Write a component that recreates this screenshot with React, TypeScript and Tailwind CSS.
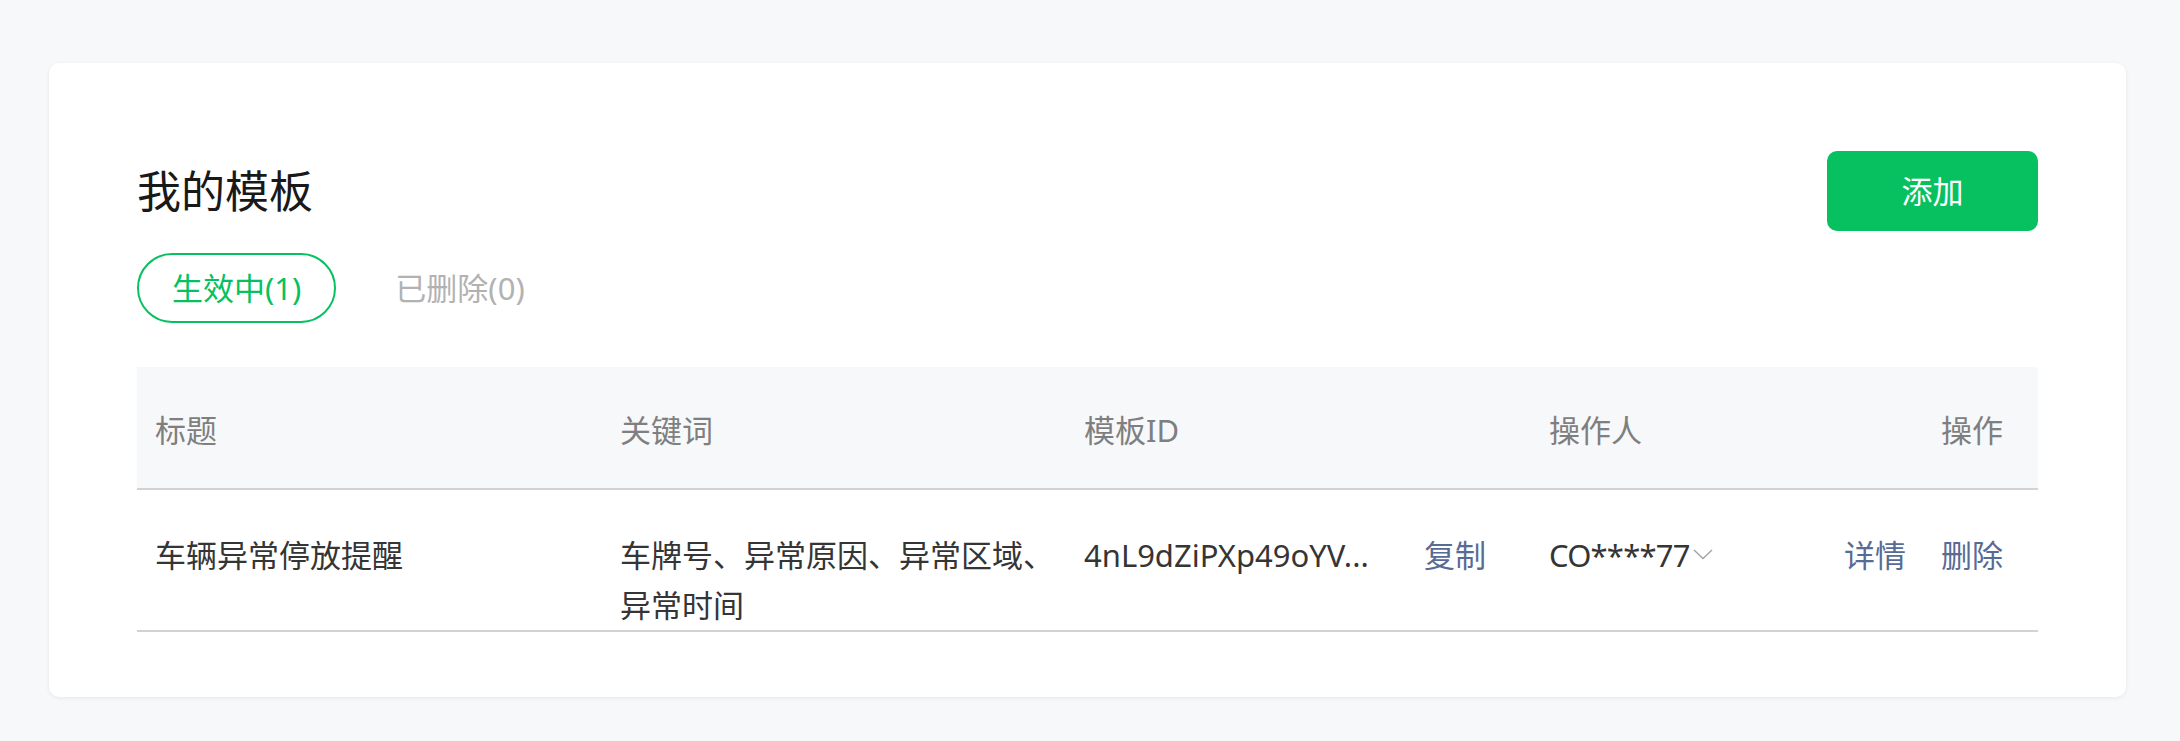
import React from 'react'

function Chevron() {
  return (
    <svg width="20" height="11" viewBox="0 0 20 11" className="ml-[3px] mt-[-2px]" fill="none">
      <path d="M1 1l9 8.5L19 1" stroke="#a3a3a3" strokeWidth="1.4" />
    </svg>
  )
}

export default function App() {
  return (
    <div className="min-h-screen bg-[#f7f8fa] pb-[44px] pl-[49px] pr-[54px] pt-[63px] font-['Noto_Sans','Noto_Sans_CJK_SC',sans-serif]">
      <div className="rounded-[10px] bg-white px-[88px] pb-[65px] pt-[88px] shadow-[0_1px_4px_rgba(0,0,0,0.07)]">
        {/* title + add */}
        <div className="flex h-[80px] items-center justify-between">
          <h1 className="text-[44px] leading-none text-[#191919]">我的模板</h1>
          <button className="flex h-[80px] w-[211px] items-center justify-center rounded-[10px] bg-[#07c160] text-[31px] text-white">
            添加
          </button>
        </div>

        {/* tabs */}
        <div className="mt-[22px] flex items-center gap-[59px]">
          <span className="flex h-[70px] items-center rounded-full border-2 border-[#07c160] px-[33px] text-[31px] text-[#07c160]">
            生效中(1)
          </span>
          <span className="text-[31px] text-[#b2b2b2]">已删除(0)</span>
        </div>

        {/* table */}
        <div className="mt-[44px] text-[31px]">
          <div className="grid h-[123px] grid-cols-[465px_464px_465px_1fr_auto] items-center border-b-2 border-[#d2d2d2] bg-[#f7f8fa] pt-[6px] text-[#7f7f7f]">
            <div className="pl-[18px]">标题</div>
            <div className="pl-[18px]">关键词</div>
            <div className="pl-[18px]">模板ID</div>
            <div className="pl-[18px]">操作人</div>
            <div className="pr-[35px] text-right">操作</div>
          </div>
          <div className="grid grid-cols-[465px_464px_465px_1fr_auto] items-start border-b-2 border-[#d2d2d2] pt-[40px] leading-[50px] text-[#353535]">
            <div className="pl-[18px]">车辆异常停放提醒</div>
            <div className="pl-[18px] pr-[10px]">车牌号、异常原因、异常区域、异常时间</div>
            <div className="flex pl-[18px]">
              <span className="inline-block w-[340px] shrink-0 whitespace-nowrap">4nL9dZiPXp49oYV...</span>
              <a className="text-[#576b95]">复制</a>
            </div>
            <div className="flex items-center pl-[18px]">
              <span className="tracking-[-0.8px]">CO****77</span>
              <Chevron />
            </div>
            <div className="flex gap-[35px] pr-[35px] text-[#576b95]">
              <a>详情</a>
              <a>删除</a>
            </div>
          </div>
        </div>
      </div>
    </div>
  )
}
